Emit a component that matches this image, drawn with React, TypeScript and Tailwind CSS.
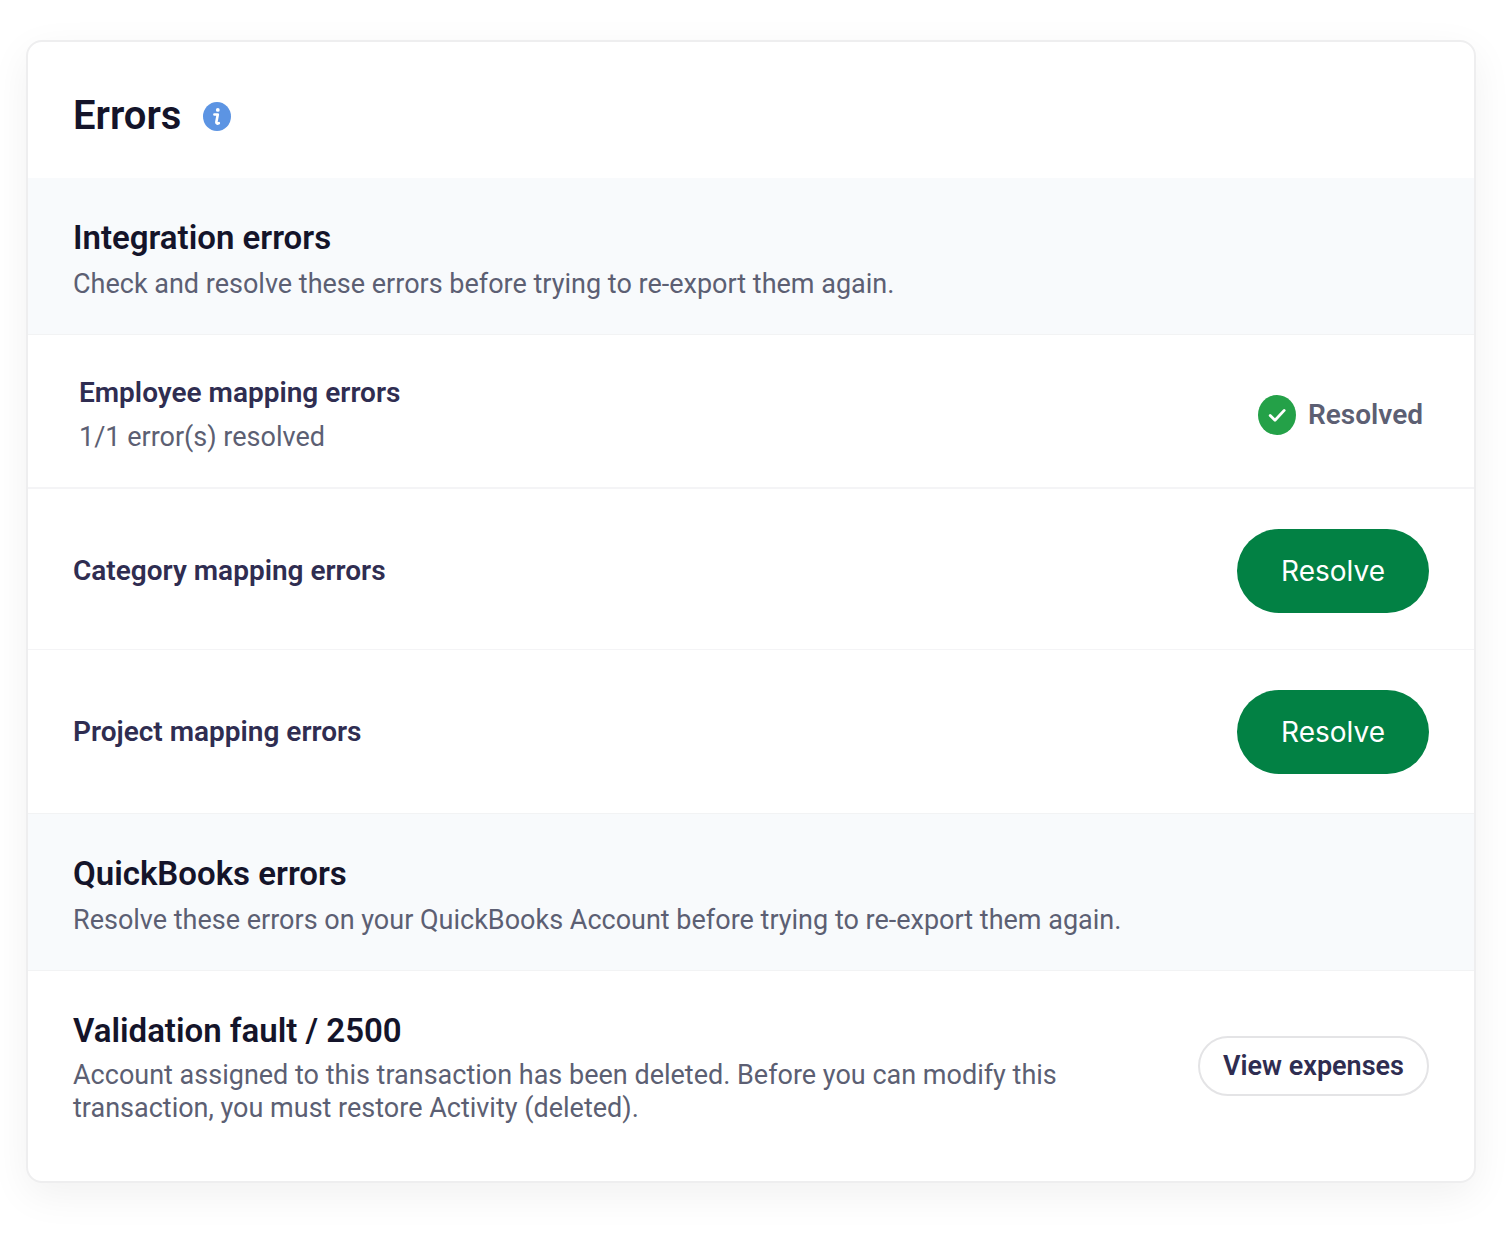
import React from "react";

function InfoIcon() {
  return (
    <svg viewBox="0 0 28 29" className="h-[29px] w-7" role="img" aria-label="Information">
      <ellipse cx="14" cy="14.5" rx="14" ry="14.5" fill="#5c94e3" />
      <circle cx="14.8" cy="7.9" r="1.9" fill="#fff" />
      <path d="M11.4 12.5h3.4l-1.4 7.2q-.3 2 1.2 1.9l1.2-.4" fill="none" stroke="#fff" strokeWidth="2.6" strokeLinecap="round" strokeLinejoin="round" />
    </svg>
  );
}

function CheckIcon() {
  return (
    <svg viewBox="0 0 38 40" className="h-10 w-[38px]" aria-hidden="true">
      <ellipse cx="19" cy="20" rx="19" ry="20" fill="#24a148" />
      <path d="M12.2 20.4l4.8 4.8 9.2-9.8" fill="none" stroke="#fff" strokeWidth="2.8" strokeLinecap="round" strokeLinejoin="round" />
    </svg>
  );
}

function SectionHeader({ title, text }: { title: string; text: string }) {
  return (
    <div className="border-b border-[#f2f3f4] bg-[#f8fafc] px-[45px] pt-9 pb-7">
      <h2 className="text-[33px] leading-12 font-semibold text-[#14142a]">{title}</h2>
      <p className="text-[27px] leading-11 text-[#5c5f73]">{text}</p>
    </div>
  );
}

function ResolveButton() {
  return (
    <button type="button" className="h-21 rounded-full bg-[#028144] px-11 font-['Inter',sans-serif] text-[28px] text-white">
      Resolve
    </button>
  );
}

export default function App() {
  return (
    <main className="min-h-screen bg-white pt-10 pr-9 pb-13 pl-[26px] font-['Roboto',sans-serif]">
      <section className="rounded-2xl border-2 border-[#eeeeef] bg-white shadow-[0_12px_40px_rgba(0,0,0,0.06)]">
        <header className="flex items-center gap-[22px] px-[45px] pt-12 pb-9">
          <h1 className="text-[40px] leading-[52px] font-semibold text-[#14142a]">Errors</h1>
          <InfoIcon />
        </header>
        <SectionHeader title="Integration errors" text="Check and resolve these errors before trying to re-export them again." />
        <div className="flex items-center justify-between border-b-2 border-[#f4f4f6] px-[51px] pt-9 pb-7">
          <div>
            <h3 className="text-[28px] leading-11 font-semibold text-[#2f2d51]">Employee mapping errors</h3>
            <p className="text-[27px] leading-11 text-[#5c5f73]">1/1 error(s) resolved</p>
          </div>
          <div className="flex items-center gap-3 text-[28px] font-semibold text-[#5c5f73]">
            <CheckIcon />
            Resolved
          </div>
        </div>
        <div className="flex items-center justify-between border-b border-[#f4f4f6] px-[45px] pt-10 pb-9">
          <h3 className="text-[28px] leading-11 font-semibold text-[#2f2d51]">Category mapping errors</h3>
          <ResolveButton />
        </div>
        <div className="flex items-center justify-between border-b border-[#f2f3f4] px-[45px] pt-10 pb-[39px]">
          <h3 className="text-[28px] leading-11 font-semibold text-[#2f2d51]">Project mapping errors</h3>
          <ResolveButton />
        </div>
        <SectionHeader title="QuickBooks errors" text="Resolve these errors on your QuickBooks Account before trying to re-export them again." />
        <div className="flex items-center justify-between gap-12 px-[45px] pt-9 pb-14">
          <div className="max-w-5xl">
            <h2 className="text-[33px] leading-12 font-semibold text-[#14142a]">Validation fault / 2500</h2>
            <p className="mt-1 text-[27px] leading-[33px] text-[#5c5f73]">
              Account assigned to this transaction has been deleted. Before you can modify this<br />
              transaction, you must restore Activity (deleted).
            </p>
          </div>
          <button type="button" className="h-15 shrink-0 rounded-full border-2 border-[#e4e4e6] px-[23px] text-[27px] font-semibold text-[#2f2d51]">
            View expenses
          </button>
        </div>
      </section>
    </main>
  );
}
